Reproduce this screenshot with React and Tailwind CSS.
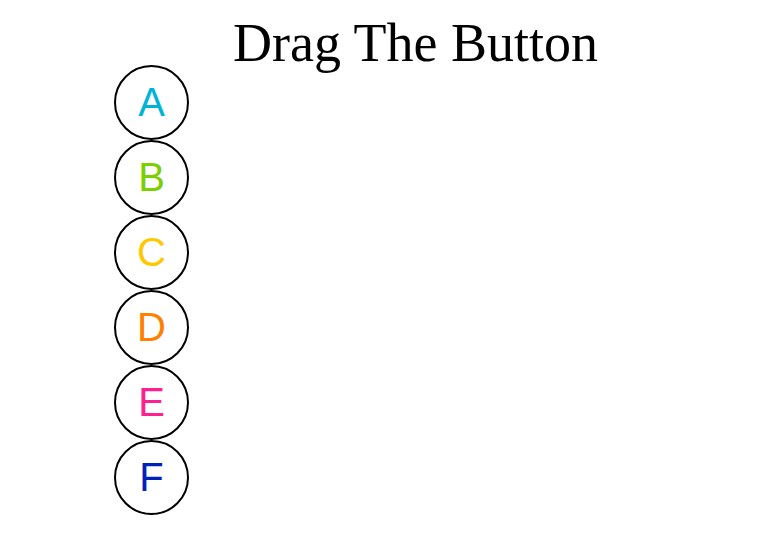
import React from 'react';

const buttons = [
  { label: 'A', color: 'text-[#00b4d8]' },
  { label: 'B', color: 'text-[#7ccf00]' },
  { label: 'C', color: 'text-[#ffc800]' },
  { label: 'D', color: 'text-[#ff8000]' },
  { label: 'E', color: 'text-[#ff2090]' },
  { label: 'F', color: 'text-[#0022bb]' },
];

export default function App() {
  return (
    <div className="w-[784px] h-[538px] bg-white overflow-hidden">
      <h1 className="pt-[22px] pb-[1px] pl-[233px] leading-[42px] text-[54px] text-black font-['Liberation_Serif',serif] whitespace-nowrap">
        Drag The Button
      </h1>
      <div className="flex flex-col pl-[114px]">
        {buttons.map(b => (
          <div
            key={b.label}
            className={`w-[75px] h-[75px] pb-[2px] rounded-full border-2 border-black flex items-center justify-center text-[40px] leading-none font-['Liberation_Sans',Arial,sans-serif] ${b.color}`}
          >
            {b.label}
          </div>
        ))}
      </div>
    </div>
  );
}
